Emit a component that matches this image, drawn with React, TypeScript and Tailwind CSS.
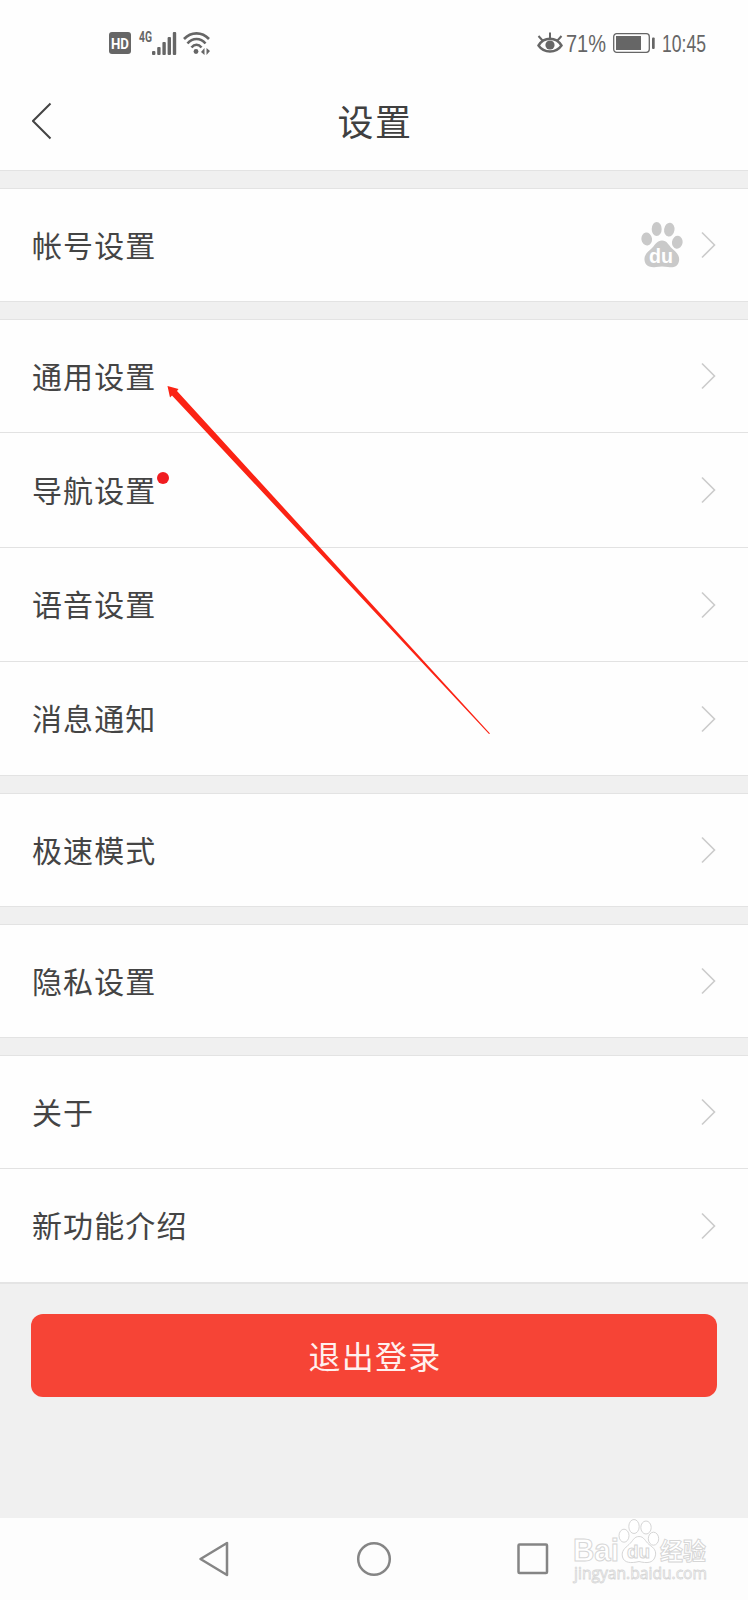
import clsx from 'clsx'

interface SettingItem {
  label: string
  height: string
  dot?: boolean
  account?: boolean
}

const GROUPS: SettingItem[][] = [
  [{ label: '帐号设置', height: 'h-[112px]', account: true }],
  [
    { label: '通用设置', height: 'h-[113px]' },
    { label: '导航设置', height: 'h-[115px]', dot: true },
    { label: '语音设置', height: 'h-[114px]' },
    { label: '消息通知', height: 'h-[113px]' },
  ],
  [{ label: '极速模式', height: 'h-[112px]' }],
  [{ label: '隐私设置', height: 'h-[112px]' }],
  [
    { label: '关于', height: 'h-[113px]' },
    { label: '新功能介绍', height: 'h-[113px]' },
  ],
]

const BARS = [4, 8, 13, 18, 23]

function StatusBar() {
  return (
    <div className="flex h-[86px] items-center pl-[109px] pr-[41px] text-[#666]">
      {/* HD badge */}
      <div className="flex h-[22px] w-[22px] items-center justify-center rounded-[3px] bg-[#666]">
        <svg width="20" height="18" viewBox="0 0 20 18">
          <text x="1" y="14.500" textLength="18" lengthAdjust="spacingAndGlyphs" fill="#fff" className="font-[Roboto] text-[15px] font-bold">HD</text>
        </svg>
      </div>

      {/* Signal */}
      <svg className="ml-[7px]" width="40" height="32" viewBox="0 -4 40 32" fill="currentColor">
        <text x="1" y="11" textLength="13" lengthAdjust="spacingAndGlyphs" className="font-[Roboto] text-[14px] font-bold">4G</text>
        {BARS.map((h, i) => (
          <rect key={h} x={14 + i * 5.2} y={24 - h} width="3.4" height={h} rx="1" />
        ))}
      </svg>

      {/* Wifi */}
      <svg className="ml-[5px]" width="30" height="24" viewBox="0 0 30 24" fill="none" stroke="currentColor" strokeWidth="2.600">
        <path d="M1 8C8 0.500 19 0.500 26 8" />
        <path d="M4.500 12.500C9.500 6.500 17.500 6.500 22.500 12.500" />
        <path d="M8.500 16.500C11.500 12.800 15.500 12.800 18.500 16.500" />
        <circle cx="13" cy="20.500" r="2.400" fill="currentColor" stroke="none" />
        <path d="M21.500 17v7l-3.500-3zM23.500 17v7l3.500-4z" fill="currentColor" stroke="none" />
      </svg>

      <div className="flex-1" />

      {/* Eye comfort */}
      <svg width="26" height="22" viewBox="0 0 26 22" fill="none" stroke="currentColor" strokeWidth="2.400">
        <path d="M1.500 13.500C7 4.500 19 4.500 24.500 13.500C19 21.500 7 21.500 1.500 13.500Z" />
        <path d="M13 6.500V0.500M5.500 8.500L1.500 4M20.500 8.500L24.500 4" strokeWidth="2" />
        <circle cx="13" cy="13" r="4.600" fill="currentColor" stroke="none" />
      </svg>
      <svg className="ml-[3px]" width="42" height="32" viewBox="0 -4 42 32" fill="currentColor">
        <text x="0" y="21" textLength="40" lengthAdjust="spacingAndGlyphs" className="font-['Liberation_Sans'] text-[24px]">71%</text>
      </svg>

      {/* Battery */}
      <svg className="ml-[5px]" width="43" height="20" viewBox="0 0 43 20">
        <rect x="0.700" y="0.700" width="35.600" height="18.600" rx="3" fill="none" stroke="currentColor" strokeWidth="1.300" />
        <rect x="3" y="3" width="25" height="14" fill="currentColor" />
        <rect x="39" y="4.500" width="2.700" height="11.500" rx="1" fill="currentColor" />
      </svg>
      <svg className="ml-[6px]" width="45" height="32" viewBox="0 -4 45 32" fill="currentColor">
        <text x="0" y="21" textLength="44" lengthAdjust="spacingAndGlyphs" className="font-['Liberation_Sans'] text-[24px]">10:45</text>
      </svg>
    </div>
  )
}

function Paw() {
  return (
    <svg width="42" height="48" viewBox="0 0 42 48" fill="#c9c9c9">
      <ellipse cx="5.700" cy="18" rx="5.300" ry="6.500" transform="rotate(-8 5.700 18)" />
      <ellipse cx="15.700" cy="8" rx="5" ry="7" />
      <ellipse cx="28.300" cy="8.600" rx="5.200" ry="7" transform="rotate(8 28.300 8.600)" />
      <ellipse cx="36.300" cy="21.200" rx="5.300" ry="6.500" transform="rotate(8 36.300 21.200)" />
      <path d="M21 19.500C26 19.500 27.500 24 31 27.500C35 31 39 34 38 40C37 46 32 47 27 46C23 45.200 19 45.200 15 46C9 46.800 4 45 3.500 39C3 33 8 30 11 27C14.500 23.500 16 19.500 21 19.500Z" />
      <text x="8" y="42" textLength="24" lengthAdjust="spacingAndGlyphs" fill="#fff" className="font-['Liberation_Sans'] text-[21px] font-bold">du</text>
    </svg>
  )
}

function Row({ item, last }: { item: SettingItem; last: boolean }) {
  return (
    <div
      className={clsx(
        'flex items-center bg-[#fefefe] pl-8 pr-[32px]',
        item.height,
        !last && 'border-b border-[#e2e2e2]',
      )}
    >
      <span className="relative mb-[3px] text-[30px] leading-none tracking-[1.1px] text-[#444]">
        {item.label}
        {item.dot && <span className="absolute -right-[13px] -top-[2px] h-[12px] w-[12px] rounded-full bg-[#f01c20]" />}
      </span>
      <div className="ml-auto flex items-center gap-[18px]">
        {item.account && <Paw />}
        <svg width="15" height="28" viewBox="0 0 15 28" fill="none" stroke="#cbcbcb" strokeWidth="1.600">
          <path d="M1 1.500L13.500 14L1 26.500" />
        </svg>
      </div>
    </div>
  )
}

function Watermark() {
  return (
    <svg className="absolute left-[570px] top-[1518px]" width="142" height="70" viewBox="0 0 142 70" fill="#fff" stroke="#d6d6d6" strokeWidth="1">
      <text x="3" y="43" textLength="46" lengthAdjust="spacingAndGlyphs" className="font-['Liberation_Sans'] text-[31px] font-bold">Bai</text>
      <ellipse cx="54" cy="17.700" rx="5" ry="6.500" />
      <ellipse cx="64" cy="8.500" rx="5.200" ry="7" />
      <ellipse cx="76" cy="9.500" rx="5.200" ry="6.500" />
      <ellipse cx="83.500" cy="20.700" rx="5.200" ry="6.500" />
      <path d="M69 18.500C74 18.500 75 23 79 26.500C84 30 87 33 85 39C83 45 77 45.500 69 43.500C61 45.500 54 45 52.500 39C51 33 55 30 59 26.500C63 23 64 18.500 69 18.500Z" />
      <text x="57" y="40" textLength="23" lengthAdjust="spacingAndGlyphs" className="font-['Liberation_Sans'] text-[19px] font-bold">du</text>
      <text x="90" y="42" textLength="46" lengthAdjust="spacingAndGlyphs" className="font-['Noto_Sans_CJK_SC'] text-[24px] font-bold">经验</text>
      <text x="4" y="61" textLength="133" lengthAdjust="spacingAndGlyphs" strokeWidth="0.800" className="font-['Open_Sans'] text-[16px]">jingyan.baidu.com</text>
    </svg>
  )
}

export default function App() {
  return (
    <div className="relative flex h-[1600px] w-[748px] flex-col overflow-hidden bg-[#f0f0f0] font-['Noto_Sans_CJK_SC',sans-serif]">
      <header className="h-[170px] bg-[#fefefe]">
        <StatusBar />
        <div className="grid h-[70px] grid-cols-[1fr_auto_1fr] items-center px-8">
          <svg width="20" height="38" viewBox="0 0 20 38" fill="none" stroke="#444" strokeWidth="2">
            <path d="M18.500 1.500L1 19L18.500 36.500" />
          </svg>
          <h1 className="mb-[2px] pl-[2px] text-[36px] leading-none tracking-[1.500px] text-[#404040]">设置</h1>
        </div>
      </header>

      {GROUPS.map((group) => (
        <section key={group[0].label}>
          <div className="h-[19px] border-y border-[#e3e3e3]" />
          {group.map((item, i) => (
            <Row key={item.label} item={item} last={i === group.length - 1} />
          ))}
        </section>
      ))}

      {/* Logout */}
      <div className="flex-1 border-t-2 border-[#e4e4e4] px-[31px] pt-[30px]">
        <button className="h-[83px] w-full rounded-[12px] bg-[#f64436] pb-[2px] pl-[2px] text-[32px] leading-none tracking-[1.300px] text-[#fff0ee]">
          退出登录
        </button>
      </div>

      {/* System navigation */}
      <nav className="flex h-[82px] items-center bg-[#fdfdfd] pl-[198px]">
        <svg width="32" height="36" viewBox="0 0 32 36" fill="none" stroke="#858585" strokeWidth="2.500" strokeLinejoin="round">
          <path d="M29 2V34L2.500 18Z" />
        </svg>
        <svg className="ml-[126px]" width="36" height="36" viewBox="0 0 36 36" fill="none" stroke="#858585" strokeWidth="2.500">
          <circle cx="18" cy="18" r="15.800" />
        </svg>
        <svg className="ml-[124px]" width="34" height="34" viewBox="0 0 34 34" fill="none" stroke="#858585" strokeWidth="2.500">
          <rect x="2.500" y="2.500" width="28.500" height="28.500" rx="1" />
        </svg>
      </nav>

      {/* Pointer arrow */}
      <svg className="pointer-events-none absolute left-[160px] top-[380px]" width="336" height="360" viewBox="0 0 336 360" fill="#fb2314">
        <path d="M7.500 6L18.500 9L17 11L330 353.500L329 354L12 15.500L10 17.500Z" />
      </svg>

      <Watermark />
    </div>
  )
}
